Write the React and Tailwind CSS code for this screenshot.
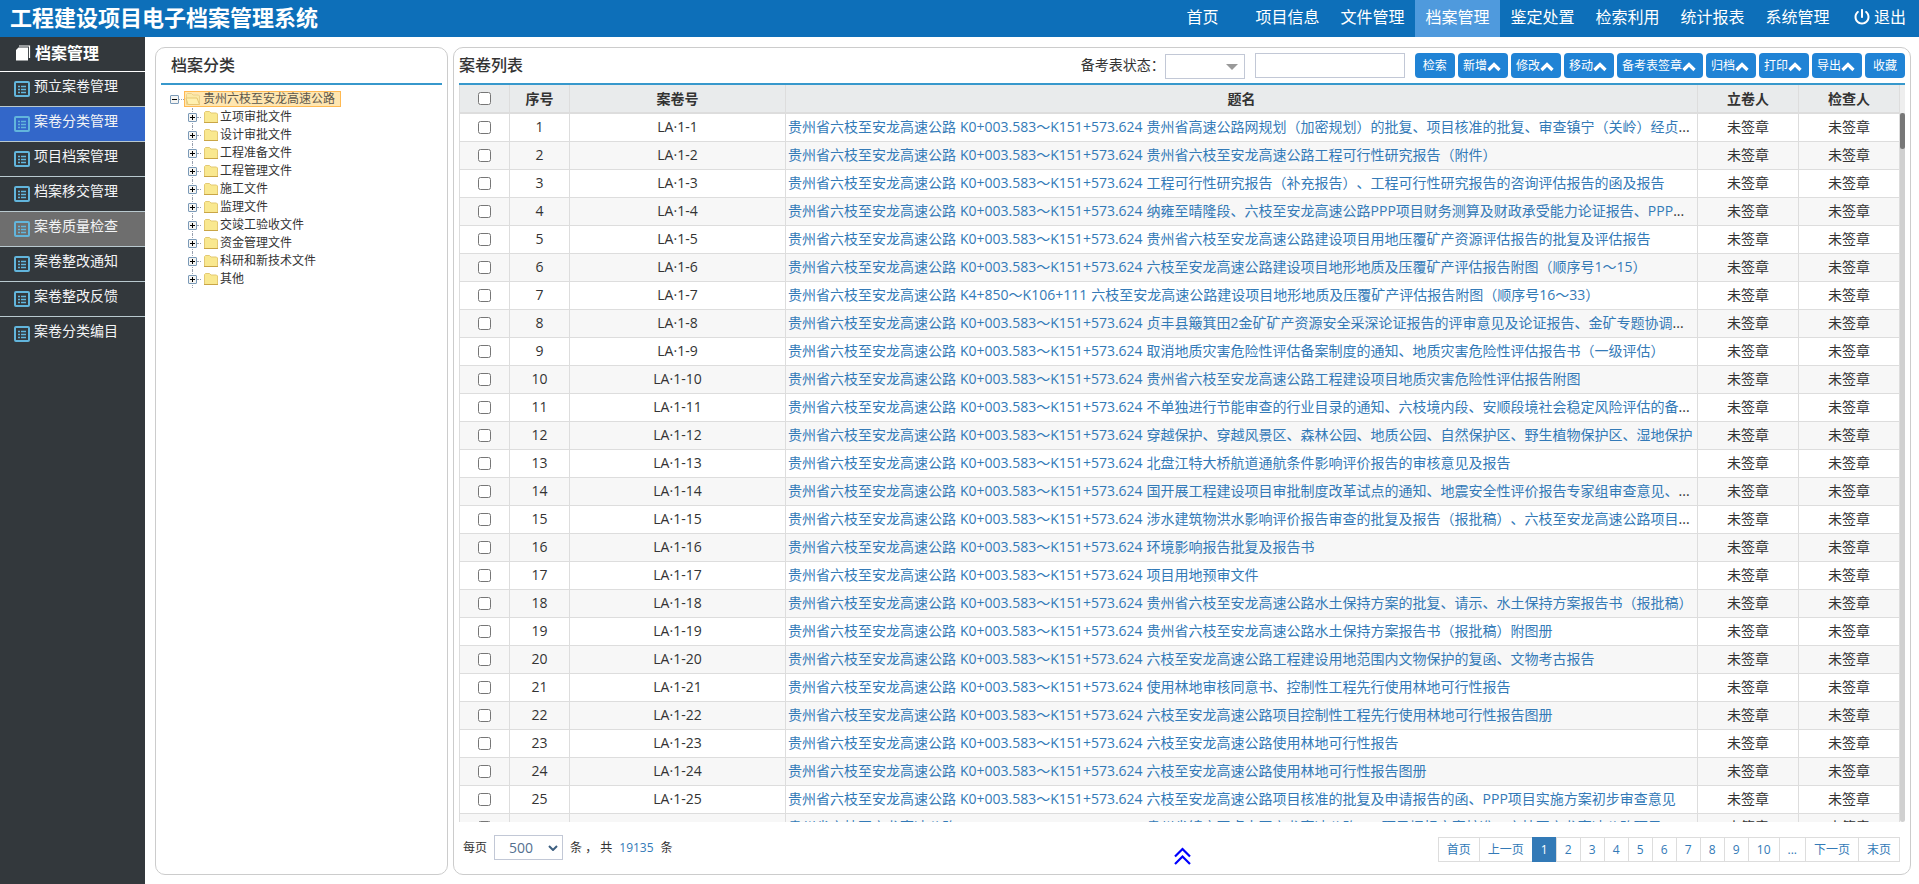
import { FaPowerOff } from 'react-icons/fa6';

const navItems = ['首页', '项目信息', '文件管理', '档案管理', '鉴定处置', '检索利用', '统计报表', '系统管理'];

const sideItems = ['预立案卷管理', '案卷分类管理', '项目档案管理', '档案移交管理', '案卷质量检查', '案卷整改通知', '案卷整改反馈', '案卷分类编目'];

const treeItems = ['立项审批文件', '设计审批文件', '工程准备文件', '工程管理文件', '施工文件', '监理文件', '交竣工验收文件', '资金管理文件', '科研和新技术文件', '其他'];

const actions = [
    { label: '检索' },
    { label: '新增', menu: true },
    { label: '修改', menu: true },
    { label: '移动', menu: true },
    { label: '备考表签章', menu: true },
    { label: '归档', menu: true },
    { label: '打印', menu: true },
    { label: '导出', menu: true },
    { label: '收藏' },
];

const pages = ['首页', '上一页', '1', '2', '3', '4', '5', '6', '7', '8', '9', '10', '...', '下一页', '末页'];

const road = '贵州省六枝至安龙高速公路';
const fullRange = 'K0+003.583～K151+573.624';

const rows = [
    { title: '贵州省高速公路网规划（加密规划）的批复、项目核准的批复、审查镇宁（关岭）经贞', cut: true },
    { title: '贵州省六枝至安龙高速公路工程可行性研究报告（附件）' },
    { title: '工程可行性研究报告（补充报告）、工程可行性研究报告的咨询评估报告的函及报告' },
    { title: '纳雍至晴隆段、六枝至安龙高速公路PPP项目财务测算及财政承受能力论证报告、PPP', cut: true },
    { title: '贵州省六枝至安龙高速公路建设项目用地压覆矿产资源评估报告的批复及评估报告' },
    { title: '六枝至安龙高速公路建设项目地形地质及压覆矿产评估报告附图（顺序号1～15）' },
    { range: 'K4+850～K106+111', title: '六枝至安龙高速公路建设项目地形地质及压覆矿产评估报告附图（顺序号16～33）' },
    { title: '贞丰县簸箕田2金矿矿产资源安全采深论证报告的评审意见及论证报告、金矿专题协调', cut: true },
    { title: '取消地质灾害危险性评估备案制度的通知、地质灾害危险性评估报告书（一级评估）' },
    { title: '贵州省六枝至安龙高速公路工程建设项目地质灾害危险性评估报告附图' },
    { title: '不单独进行节能审查的行业目录的通知、六枝境内段、安顺段境社会稳定风险评估的备', cut: true },
    { title: '穿越保护、穿越风景区、森林公园、地质公园、自然保护区、野生植物保护区、湿地保护' },
    { title: '北盘江特大桥航道通航条件影响评价报告的审核意见及报告' },
    { title: '国开展工程建设项目审批制度改革试点的通知、地震安全性评价报告专家组审查意见、', cut: true },
    { title: '涉水建筑物洪水影响评价报告审查的批复及报告（报批稿）、六枝至安龙高速公路项目', cut: true },
    { title: '环境影响报告批复及报告书' },
    { title: '项目用地预审文件' },
    { title: '贵州省六枝至安龙高速公路水土保持方案的批复、请示、水土保持方案报告书（报批稿）' },
    { title: '贵州省六枝至安龙高速公路水土保持方案报告书（报批稿）附图册' },
    { title: '六枝至安龙高速公路工程建设用地范围内文物保护的复函、文物考古报告' },
    { title: '使用林地审核同意书、控制性工程先行使用林地可行性报告' },
    { title: '六枝至安龙高速公路项目控制性工程先行使用林地可行性报告图册' },
    { title: '六枝至安龙高速公路使用林地可行性报告' },
    { title: '六枝至安龙高速公路使用林地可行性报告图册' },
    { title: '六枝至安龙高速公路项目核准的批复及申请报告的函、PPP项目实施方案初步审查意见' },
    { title: '贵州省镇宁至贞丰至安龙高速公路PPP项目招标方案核准、六枝至安龙高速公路项目' },
];

function ListIcon() {
    return (
        <svg viewBox="0 0 16 16" className="w-4 h-4 shrink-0" fill="none" stroke="#62b5dc" aria-hidden="true">
            <rect x="1" y="1" width="14" height="14" rx="1" strokeWidth="2" />
            <path d="M4 5.5h2M7 5.5h5M4 8.5h2M7 8.5h5M4 11.5h2M7 11.5h5" strokeWidth="1.5" />
        </svg>
    );
}

function BookIcon() {
    return (
        <svg viewBox="0 0 16 16" className="w-4 h-4" aria-hidden="true">
            <path d="M4 1h10.500v12" fill="none" stroke="#fff" strokeWidth="1.2" />
            <path d="M3.500 2.500H13V15.500H1V5z" fill="#fff" />
        </svg>
    );
}

function CaretUp() {
    return (
        <svg viewBox="0 0 14 12" className="w-[14px] h-3" fill="none" stroke="currentColor" strokeWidth="3.2" aria-hidden="true">
            <path d="M1.500 10L7 4.500L12.500 10" />
        </svg>
    );
}

function DoubleUp() {
    return (
        <svg viewBox="0 0 17 18" className="w-[17px] h-[18px]" fill="none" stroke="#0000ff" strokeWidth="2.2" aria-hidden="true">
            <path d="M1 9.500L8.500 2L16 9.500M1 17L8.500 9.500L16 17" />
        </svg>
    );
}

function ToggleIcon({ open }) {
    return (
        <svg viewBox="0 0 9 9" className="w-[9px] h-[9px]" aria-hidden="true">
            <rect x="0.5" y="0.5" width="8" height="8" rx="0.5" fill="#f4f4f2" stroke="#7b9ab8" />
            <path d={open ? 'M2 4.500h5' : 'M2 4.500h5M4.500 2v5'} stroke="#000" />
        </svg>
    );
}

function FolderIcon({ open }) {
    return (
        <svg viewBox="0 0 16 14" className="w-4 h-[14px] shrink-0" aria-hidden="true">
            <path d="M1.500 12.500v-10l1-1h4l1.500 1.500h5.500l1 1v8.500z" fill={open ? '#fbe9a8' : '#f9e88f'} stroke={open ? '#ecd28a' : '#e3c973'} />
            {open ? (
                <path d="M3 12.500L1 6h11l2.500 6.500z" fill="#fff0b0" stroke="#e6c774" />
            ) : (
                <path d="M1 12.500h14" stroke="#c9a545" />
            )}
        </svg>
    );
}

function Header() {
    return (
        <header className="flex h-[37px] shrink-0 items-center justify-between bg-[#0d6fb9] text-white">
            <h1 className="pb-1 pl-[10px] text-[22px] leading-8 font-bold">工程建设项目电子档案管理系统</h1>
            <nav className="flex h-full text-base">
                {navItems.map((item) => (
                    <a
                        key={item}
                        href="#"
                        className={`flex w-[85px] items-center justify-center pb-1 ${item === '档案管理' ? 'bg-[#4f9add]' : ''}`}
                    >
                        {item}
                    </a>
                ))}
                <a href="#" className="flex items-center gap-1 pr-[13px] pb-1 pl-[14px]">
                    <FaPowerOff className="w-4 h-4" />
                    退出
                </a>
            </nav>
        </header>
    );
}

function Sidebar() {
    return (
        <aside className="w-[145px] shrink-0 bg-[#33383c] text-white">
            <h2 className="flex h-[35px] items-center gap-1 border-b border-white pb-[3px] pl-[15px] text-base font-bold">
                <BookIcon />
                档案管理
            </h2>
            <ul>
                {sideItems.map((item, i) => (
                    <li key={item} className={i < sideItems.length - 1 ? 'border-b border-[#b9c9cf]' : ''}>
                        <a
                            href="#"
                            className={`flex h-[34px] items-end gap-1 pl-[14px] text-sm text-gray-100 ${i === 1 ? 'bg-[#3367c9]' : i === 4 ? 'bg-[#6e6e6e]' : ''}`}
                        >
                            <span className="pb-[9px]"><ListIcon /></span>
                            <span className="pb-[10px]">{item}</span>
                        </a>
                    </li>
                ))}
            </ul>
        </aside>
    );
}

function CategoryTree() {
    return (
        <section className="w-[293px] shrink-0 rounded-[10px] border border-[#ccc] px-[5px]">
            <h3 className="h-[37px] border-b-2 border-[#3798cc] pt-[5px] pl-[10px] text-base font-medium text-[#333]">档案分类</h3>
            <div className="pt-[5px] pl-[9px] text-xs text-[#333]">
                <div className="flex h-[18px] items-center">
                    <ToggleIcon open />
                    <span className="w-[5px] border-t border-dotted border-gray-400" />
                    <a href="#" className="flex h-4 items-center gap-[2px] border border-[#ffb951] bg-[#ffe6b0] pr-[5px]">
                        <FolderIcon open />
                        <span className="opacity-80">贵州六枝至安龙高速公路</span>
                    </a>
                </div>
                <ul className="pl-[18px]">
                    {treeItems.map((item) => (
                        <li key={item} className="relative flex h-[18px] items-center">
                            <span className="absolute top-0 left-1 h-[18px] border-l border-dotted border-gray-400" />
                            <span className="relative"><ToggleIcon /></span>
                            <span className="mr-[2px] w-1 border-t border-dotted border-gray-400" />
                            <a href="#" className="flex items-center gap-px">
                                <FolderIcon />
                                {item}
                            </a>
                        </li>
                    ))}
                </ul>
            </div>
        </section>
    );
}

function Toolbar() {
    return (
        <div className="flex h-[37px] shrink-0 items-start border-b-2 border-[#3798cc] pt-[5px] text-[#333]">
            <h3 className="flex-1 text-base font-medium">案卷列表</h3>
            <label htmlFor="status" className="text-sm leading-6">备考表状态：</label>
            <div className="relative mt-px mr-[10px]">
                <select id="status" className="block h-[25px] w-20 appearance-none border border-[#c2c8d6] bg-white">
                    <option></option>
                </select>
                <span className="pointer-events-none absolute top-[10px] right-[7px] border-x-6 border-t-6 border-x-transparent border-t-[#999]" />
            </div>
            <input type="text" aria-label="检索内容" className="mr-[10px] h-[25px] w-[150px] border border-[#c2c8d6] px-2 text-sm" />
            <div className="flex gap-[3px]">
                {actions.map(({ label, menu }) => (
                    <button
                        key={label}
                        type="button"
                        className={`flex h-[25px] items-center rounded bg-[#2083d5] text-xs text-white ${menu ? 'pr-[7px] pl-[5px]' : 'px-2'}`}
                    >
                        {label}
                        {menu && <CaretUp />}
                    </button>
                ))}
            </div>
        </div>
    );
}

function ArchiveTable() {
    return (
        <div className="flex min-h-0 flex-1">
            <div className="min-w-0 flex-1 overflow-hidden">
                <table className="w-full table-fixed border-collapse text-center text-sm text-[#333]">
                    <colgroup>
                        <col className="w-[50px]" />
                        <col className="w-[60px]" />
                        <col className="w-[216px]" />
                        <col />
                        <col className="w-[101px]" />
                        <col className="w-[101px]" />
                    </colgroup>
                    <thead>
                        <tr className="h-7 border-b-2 border-[#ddd] bg-[#e9ebec]">
                            <th className="border-x border-[#ddd]">
                                <input type="checkbox" aria-label="全选" className="block mx-auto w-[13px] h-[13px]" />
                            </th>
                            <th className="border-x border-[#ddd]">序号</th>
                            <th className="border-x border-[#ddd]">案卷号</th>
                            <th className="border-x border-[#ddd]">题名</th>
                            <th className="border-x border-[#ddd]">立卷人</th>
                            <th className="border-x border-[#ddd]">检查人</th>
                        </tr>
                    </thead>
                    <tbody>
                        {rows.map((row, i) => (
                            <tr key={i} className="h-7 border-b border-[#ddd] even:bg-[#f7f7f7]">
                                <td className="border-x border-[#ddd]">
                                    <input type="checkbox" aria-label={`选择 ${i + 1}`} className="block mx-auto w-[13px] h-[13px]" />
                                </td>
                                <td className="border-x border-[#ddd] pb-px">{i + 1}</td>
                                <td className="border-x border-[#ddd] pb-px">{`LA·1-${i + 1}`}</td>
                                <td className="overflow-hidden border-x border-[#ddd] pb-px pl-[2px] text-left whitespace-nowrap">
                                    <a href="#" className="text-[#337ab7]">
                                        {road}
                                        <span className="px-1">{row.range || fullRange}</span>
                                        {row.title}
                                    </a>
                                    {row.cut && '...'}
                                </td>
                                <td className="border-x border-[#ddd] pb-px">未签章</td>
                                <td className="border-x border-[#ddd] pb-px">未签章</td>
                            </tr>
                        ))}
                    </tbody>
                </table>
            </div>
            <div className="flex w-[5px] flex-col">
                <div className="h-7 bg-[#eee]" />
                <div className="flex-1 rounded-b-full bg-[#d0d0d0]">
                    <div className="h-9 rounded-full bg-[#777]" />
                </div>
            </div>
        </div>
    );
}

function Footer() {
    return (
        <footer className="grid h-[52px] shrink-0 grid-cols-[1fr_auto_1fr] items-start pt-[13px] text-xs text-[#333]">
            <div className="flex items-center gap-[7px] pl-1">
                <label htmlFor="size">每页</label>
                <div className="relative">
                    <select id="size" className="block h-[25px] w-[69px] appearance-none border border-[#c2c8d6] bg-white pl-[14px] text-sm text-[#55708f]">
                        <option>500</option>
                    </select>
                    <svg viewBox="0 0 10 6" className="pointer-events-none absolute top-[10px] right-[5px] w-[10px] h-[6px]" fill="none" stroke="#3d5f80" strokeWidth="2">
                        <path d="M1 1l4 4 4-4" />
                    </svg>
                </div>
                <span>条 ， 共</span>
                <span className="text-[#337ab7]">19135</span>
                <span>条</span>
            </div>
            <button type="button" aria-label="回到顶部" className="pt-3">
                <DoubleUp />
            </button>
            <nav className="flex justify-self-end pt-[2px] pr-[5px]">
                {pages.map((page) => (
                    <a
                        key={page}
                        href="#"
                        className={`-ml-px flex h-[25px] min-w-[25px] items-center justify-center border px-2 ${page === '1' ? 'border-[#337ab7] bg-[#337ab7] text-white' : 'border-[#ddd] text-[#337ab7]'}`}
                    >
                        {page}
                    </a>
                ))}
            </nav>
        </footer>
    );
}

export default function App() {
    return (
        <div className="flex h-screen flex-col overflow-hidden bg-white font-['Open_Sans','Noto_Sans_CJK_SC',sans-serif] [text-spacing-trim:space-all]">
            <Header />
            <div className="flex min-h-0 flex-1">
                <Sidebar />
                <main className="flex min-w-0 flex-1 gap-[5px] pt-[10px] pr-2 pb-[9px] pl-[10px]">
                    <CategoryTree />
                    <section className="flex min-w-0 flex-1 flex-col rounded-[10px] border border-[#ccc] px-[5px]">
                        <Toolbar />
                        <ArchiveTable />
                        <Footer />
                    </section>
                </main>
            </div>
        </div>
    );
}
